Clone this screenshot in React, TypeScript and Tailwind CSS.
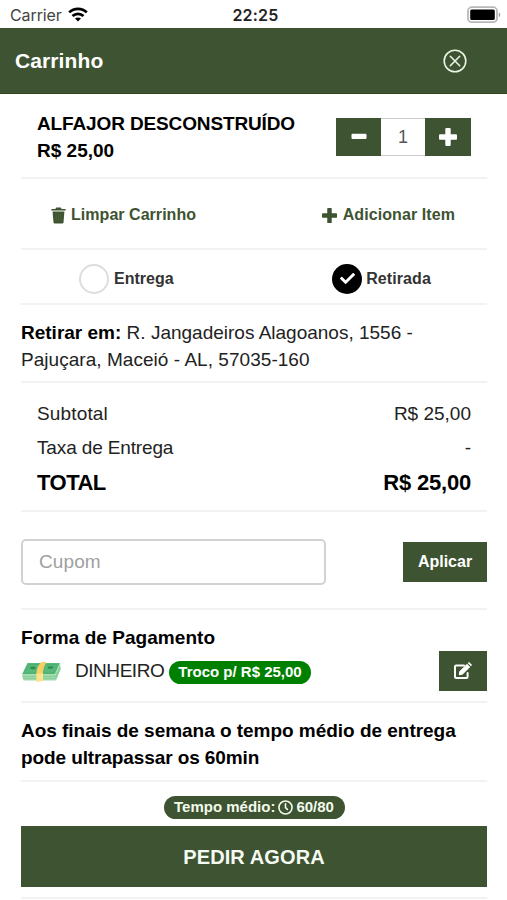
import React from 'react';
import { FaCheck } from 'react-icons/fa';

function WifiIcon() {
  return (
    <svg viewBox="0 0 20 15" className="w-5 h-[15px]" fill="none" stroke="#000" strokeWidth="2.7">
      <path d="M1.2 5.4C6.1 0.7 13.9 0.7 18.8 5.4" />
      <path d="M4.5 9C7.6 6.1 12.4 6.1 15.5 9" />
      <path d="M10 14.6L7 11.5C8.7 10 11.3 10 13 11.5Z" fill="#000" stroke="none" />
    </svg>
  );
}

function BatteryIcon() {
  return (
    <svg viewBox="0 0 34 18" className="w-[34px] h-[18px]">
      <rect x="1" y="1.2" width="29" height="15" rx="4" fill="#fff" stroke="#b8b8b8" strokeWidth="1.8" />
      <rect x="3.2" y="3.6" width="24.6" height="10.4" rx="1.5" fill="#000" />
      <path d="M31.8 6.6c1.8.6 1.8 4 0 4.6Z" fill="#999" />
    </svg>
  );
}

function TrashIcon() {
  return (
    <svg viewBox="0 0 15 17" className="w-[15px] h-[17px]" fill="#3e5430">
      <path d="M.4 2h4l.8-1.4h4.6l.8 1.4h4v1.5H.4Z" />
      <path d="M1.6 4.4h11.8l-.9 11.1q-.1 1.1-1.2 1.1H3.7q-1.1 0-1.2-1.1Z" />
      <path d="M5 6.5l.3 7.5M7.5 6.5V14M10 6.5L9.7 14" stroke="#52683f" strokeWidth=".7" />
    </svg>
  );
}

function PlusIcon({ size }: { size: number }) {
  return (
    <svg viewBox="0 0 18 18" width={size} height={size} fill="currentColor">
      <rect x="0" y="6.3" width="18" height="5.4" rx="1" />
      <rect x="6.3" y="0" width="5.4" height="18" rx="1" />
    </svg>
  );
}

function MinusIcon() {
  return (
    <svg viewBox="0 0 16 18" className="w-4 h-[18px]" fill="currentColor">
      <rect x="0.5" y="5.8" width="15" height="5.2" rx="1" />
    </svg>
  );
}

function EditIcon() {
  return (
    <svg viewBox="0 0 20 18" className="w-5 h-[18px]" fill="none" stroke="currentColor">
      <path d="M11 3.4H3.2Q2 3.4 2 4.6v10.2Q2 16 3.2 16h10.2q1.2 0 1.2-1.2V11" strokeWidth="2" strokeLinecap="round" />
      <path d="M6.2 9.6L14 1.8l3.2 3.2-7.8 7.8-3.6.5ZM14.7 1.1l.7-.7q.6-.6 1.2 0l2 2q.6.6 0 1.2l-.7.7Z" fill="currentColor" stroke="none" />
    </svg>
  );
}

function ClockIcon() {
  return (
    <svg viewBox="0 0 16 16" className="w-[15px] h-[15px]" fill="none" stroke="currentColor" strokeWidth="1.7" strokeLinecap="round">
      <circle cx="8" cy="8" r="7" />
      <path d="M8 4v4.2l2 1.8" />
    </svg>
  );
}

function MoneyIcon() {
  return (
    <svg viewBox="0 0 40 21" className="w-10 h-[21px]">
      <path d="M6.5 2L39 2 34 13.5H1Z" fill="#57b97a" />
      <path d="M1 13.5h33L39 2l.6 6L35 19.5H2.5Z" fill="#a3dbad" />
      <path d="M1.6 15.6h33l4.6-10M2 17.6h33l4.4-10" fill="none" stroke="#7bca91" strokeWidth=".8" />
      <path d="M8 3.6h28L32.4 12H3.6Z" fill="none" stroke="#46a869" strokeWidth=".6" />
      <ellipse cx="12" cy="7" rx="3" ry="1.4" fill="#2d8e50" />
      <ellipse cx="29.5" cy="6.6" rx="3" ry="1.4" fill="#2d8e50" />
      <path d="M20 1.6q3-1.6 5.4-.2-3 3.6-3.4 8.600V20l-6.500.4V12Q16 5 20 1.600Z" fill="#f8cf62" />
      <path d="M15.500 12.500H22V20l-6.500.4Z" fill="#ffe38a" />
    </svg>
  );
}

const section = 'border-b-2 border-[#f2f2f2] box-border';

export default function App() {
  return (
    <div className="w-[507px] h-[900px] overflow-hidden bg-white text-[#222] font-['Liberation_Sans',sans-serif] whitespace-nowrap">
      {/* Status bar */}
      <div className="h-7 grid grid-cols-3 items-center pl-[10px] pr-[6px] pt-px font-[Inter,sans-serif]">
        <div className="flex items-center gap-[6px] text-[16px] text-[#444]">
          <span className="tracking-[-0.1px]">Carrier</span>
          <WifiIcon />
        </div>
        <span className="text-center text-[16px] font-semibold tracking-[0.2px] text-[#222]">22:25</span>
        <div className="flex justify-end"><BatteryIcon /></div>
      </div>

      <header className="h-[66px] bg-[#3e5331] border-b border-[#33451f] flex items-center justify-between pl-[15px] pr-[40px]">
        <h1 className="text-[21px] font-bold tracking-[0.1px] text-white pt-px">Carrinho</h1>
        <svg viewBox="0 0 24 24" className="w-6 h-6" fill="none" stroke="#e9f4e3" strokeWidth="1.6" strokeLinecap="round">
          <circle cx="12" cy="12" r="10.8" />
          <path d="M7.3 7.3l9.4 9.4M16.7 7.3l-9.4 9.4" />
        </svg>
      </header>

      <main className="pl-[21px] pr-5">
        {/* Cart item */}
        <div className={`${section} h-[85px] flex justify-between px-4`}>
          <div className="pt-4 text-[19px] leading-[27px] font-bold text-black">
            <p className="tracking-[-0.13px]">ALFAJOR DESCONSTRUÍDO</p>
            <p>R$ 25,00</p>
          </div>
          <div className="mt-6 h-[38px] flex">
            <button className="w-[45px] bg-[#3e5331] text-white flex items-center justify-center"><MinusIcon /></button>
            <div className="w-[44px] border-y border-[#ccc] flex items-center justify-center text-[18px] text-[#555]">1</div>
            <button className="w-[46px] bg-[#3e5331] text-white flex items-center justify-center"><PlusIcon size={18} /></button>
          </div>
        </div>

        <div className={`${section} h-[71px] flex items-center justify-between pl-[30px] pr-[32px] pt-[3px] text-[16px] font-bold text-[#3e5331]`}>
          <button className="flex items-center gap-[5px] tracking-[0.04px]"><TrashIcon />Limpar Carrinho</button>
          <button className="flex items-center gap-[6px] tracking-[0.08px]"><PlusIcon size={15} />Adicionar Item</button>
        </div>

        {/* Delivery mode */}
        <div className={`${section} h-[55px] flex items-center justify-between pl-[58px] pr-[56px] pt-[4px] text-[16px] font-bold text-[#333]`}>
          <label className="flex items-center gap-[5px]">
            <span className="w-[30px] h-[30px] rounded-full border-2 border-[#ddd]" />
            Entrega
          </label>
          <label className="flex items-center gap-1 tracking-[0.1px]">
            <span className="w-[30px] h-[30px] rounded-full bg-black text-white flex items-center justify-center"><FaCheck size={15} /></span>
            Retirada
          </label>
        </div>

        <div className={`${section} h-[78px] pt-[14px] text-[19px] leading-[27px]`}>
          <p><b className="text-black">Retirar em:</b> R. Jangadeiros Alagoanos, 1556 -</p>
          <p className="tracking-[0.04px]">Pajuçara, Maceió - AL, 57035-160</p>
        </div>

        <div className={`${section} h-[129px] pt-[14px] px-4 text-[19px]`}>
          <div className="h-[34px] flex items-center justify-between"><span className="tracking-[0.15px]">Subtotal</span><span>R$ 25,00</span></div>
          <div className="h-[34px] flex items-center justify-between"><span className="tracking-[-0.14px]">Taxa de Entrega</span><span>-</span></div>
          <div className="h-[35px] flex items-center justify-between text-[22px] font-bold text-black"><span className="tracking-[-0.5px]">TOTAL</span><span className="tracking-[-0.2px]">R$ 25,00</span></div>
        </div>

        {/* Coupon */}
        <div className={`${section} h-[98px] flex items-center justify-between pt-[3px]`}>
          <input
            type="text"
            placeholder="Cupom"
            className="w-[305px] h-[46px] rounded-[5px] border-2 border-[#d2d2d2] px-4 text-[19px] tracking-[0.1px] placeholder:text-[#a0a0a0]"
          />
          <button className="w-[84px] h-10 bg-[#3e5331] text-white text-[16px] font-bold">Aplicar</button>
        </div>

        <div className={`${section} h-[93px] pt-[14px]`}>
          <h2 className="text-[19px] leading-[27px] font-bold text-black tracking-[0.05px]">Forma de Pagamento</h2>
          <div className="h-10 flex items-center">
            <MoneyIcon />
            <span className="ml-[14px] w-[89px] text-[19px] tracking-[-0.45px]">DINHEIRO</span>
            <span className="ml-[5px] mt-[3px] w-[142px] h-[23px] rounded-full bg-[#008000] text-white text-[15px] font-bold flex items-center justify-center">Troco p/ R$ 25,00</span>
            <button className="ml-auto w-12 h-10 bg-[#3e5331] text-white flex items-center justify-center"><EditIcon /></button>
          </div>
        </div>

        <div className={`${section} h-[79px] pt-[14px] text-[19px] leading-[27px] font-bold text-black`}>
          <p className="tracking-[-0.03px]">Aos finais de semana o tempo médio de entrega</p>
          <p className="tracking-[-0.1px]">pode ultrapassar os 60min</p>
        </div>

        <div className={`${section} h-[117px] pt-[14px]`}>
          <div className="mx-auto w-[181px] h-[23px] rounded-full bg-[#3e5331] text-[#f2faed] text-[15px] font-bold flex items-center justify-center gap-[3px]">
            Tempo médio: <ClockIcon /> 60/80
          </div>
          <button className="mt-[7px] w-full h-[61px] bg-[#3e5331] text-[#f5fbf2] text-[20px] tracking-[0.1px] font-bold">PEDIR AGORA</button>
        </div>
      </main>
    </div>
  );
}
